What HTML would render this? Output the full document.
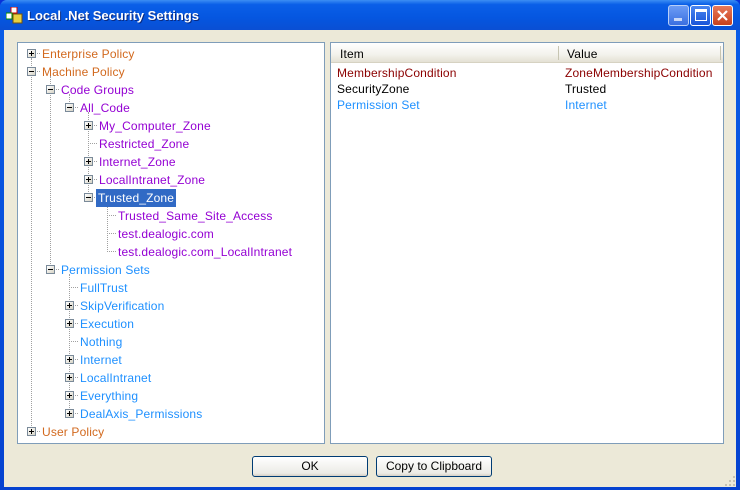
<!DOCTYPE html>
<html><head><meta charset="utf-8"><style>
*{margin:0;padding:0;box-sizing:border-box}
body{width:740px;height:490px;overflow:hidden;font-family:"Liberation Sans",sans-serif;font-size:12px;background:#0831d9}
.win{position:absolute;left:0;top:0;width:740px;height:490px;background:linear-gradient(#0a5ee8,#0542d0);border-radius:7px 7px 0 0}
.title{position:absolute;left:0;top:0;width:740px;height:30px;background:linear-gradient(#3c8ef3 0%,#0a5fe8 15%,#0556e0 60%,#0a4fd4 100%);border-radius:7px 7px 0 0}
.title span{position:absolute;left:27px;top:8px;color:#fff;font-weight:bold;font-size:13px;text-shadow:1px 1px #0a2a80}
.body{position:absolute;left:4px;top:30px;width:732px;height:457px;background:#ece9d8}
.panel{position:absolute;background:#fff;border:1px solid #7f9db9}
.t{position:absolute;white-space:nowrap;line-height:16px;letter-spacing:.15px}
.o{color:#d2691e}.p{color:#9400d3}.b{color:#1e90ff}.r{color:#8b0000}.k{color:#000}
.box{position:absolute;width:9px;height:9px;border:1px solid #7a8a99;background:linear-gradient(135deg,#fff,#d6d3c6);font-size:0}
.box::before{content:"";position:absolute;left:1px;top:3px;width:5px;height:1px;background:#000}
.box.pl::after{content:"";position:absolute;left:3px;top:1px;width:1px;height:5px;background:#000}
.vl{position:absolute;border-left:1px dotted #a0a0a0;width:0}
.hl{position:absolute;border-top:1px dotted #a0a0a0;height:0}
.btn{position:absolute;height:21px;border:1px solid #003c74;border-radius:3px;background:linear-gradient(#fff,#ecebe6 85%,#d6d0c5);text-align:center;line-height:19px;font-size:12px}
.wb{position:absolute;top:5px;width:21px;height:21px;border:1px solid #fff;border-radius:3px}
.g{position:absolute;width:2px;height:2px;background:#c5c2b2}
</style></head><body>
<div class="win">
<div class="title">
<svg style="position:absolute;left:6px;top:7px" width="18" height="17"><rect x="5" y="0" width="6" height="6" fill="#fff" stroke="#c00"/><rect x="0" y="6" width="6" height="6" fill="#fff" stroke="#080"/><rect x="7" y="7" width="9" height="9" fill="#e8d040" stroke="#705010"/></svg>
<span>Local .Net Security Settings</span>
<div class="wb" style="left:668px;background:linear-gradient(#6c9cf5,#3a6fe0);border-color:#b8cff8"><div style="position:absolute;left:5px;top:12px;width:8px;height:3px;background:#fff;opacity:.7"></div></div>
<div class="wb" style="left:690px;background:linear-gradient(#4a86f0,#1a55d8)"><div style="position:absolute;left:4px;top:3px;width:12px;height:12px;border:1px solid #fff;border-top-width:3px"></div></div>
<div class="wb" style="left:712px;background:linear-gradient(#e87a5a,#c8401c)"><svg width="19" height="19" style="position:absolute;left:0;top:0"><path d="M5 5L14 14M14 5L5 14" stroke="#fff" stroke-width="2.2"/></svg></div>
</div>
<div class="body"></div>
</div>

<div class="panel" style="left:17px;top:42px;width:308px;height:402px"></div>
<div class="panel" style="left:330px;top:42px;width:394px;height:402px"></div>
<div style="position:absolute;left:331px;top:43px;width:392px;height:20px;background:linear-gradient(#fff 0%,#f3f2ec 60%,#e4e1d4 100%);border-bottom:1px solid #d6d2c2"></div>
<div style="position:absolute;left:558px;top:46px;width:1px;height:14px;background:#c7c5b2"></div>
<div style="position:absolute;left:720px;top:46px;width:1px;height:14px;background:#c7c5b2"></div>
<div class="t k" style="left:340px;top:46px">Item</div>
<div class="t k" style="left:567px;top:46px">Value</div>
<div class="t r" style="left:337px;top:65px">MembershipCondition</div>
<div class="t r" style="left:565px;top:65px">ZoneMembershipCondition</div>
<div class="t k" style="left:337px;top:81px">SecurityZone</div>
<div class="t k" style="left:565px;top:81px">Trusted</div>
<div class="t b" style="left:337px;top:97px">Permission Set</div>
<div class="t b" style="left:565px;top:97px">Internet</div>

<div class="vl" style="left:31px;top:58px;height:374px"></div>
<div class="vl" style="left:50px;top:76px;height:194px"></div>
<div class="vl" style="left:69px;top:94px;height:14px"></div>
<div class="vl" style="left:88px;top:112px;height:86px"></div>
<div class="vl" style="left:107px;top:202px;height:50px"></div>
<div class="vl" style="left:69px;top:274px;height:140px"></div>

<div id="tree"></div>
<script>
var rows=[
[0,1,"Enterprise Policy","o"],[0,2,"Machine Policy","o"],[1,2,"Code Groups","p"],[2,2,"All_Code","p"],
[3,1,"My_Computer_Zone","p"],[3,0,"Restricted_Zone","p"],[3,1,"Internet_Zone","p"],[3,1,"LocalIntranet_Zone","p"],
[3,2,"Trusted_Zone","sel"],[4,0,"Trusted_Same_Site_Access","p"],[4,0,"test.dealogic.com","p"],[4,0,"test.dealogic.com_LocalIntranet","p"],
[1,2,"Permission Sets","b"],[2,0,"FullTrust","b"],[2,1,"SkipVerification","b"],[2,1,"Execution","b"],[2,0,"Nothing","b"],
[2,1,"Internet","b"],[2,1,"LocalIntranet","b"],[2,1,"Everything","b"],[2,1,"DealAxis_Permissions","b"],[0,1,"User Policy","o"]];
var h="";
rows.forEach(function(r,i){
 var L=r[0],c=53+18*i,bx=27+19*L,tx=42+19*L;
 h+='<div class="hl" style="left:'+(31+19*L)+'px;top:'+c+'px;width:'+(tx-31-19*L-2)+'px"></div>';
 if(r[1])h+='<div class="box'+(r[1]==1?' pl':'')+'" style="left:'+bx+'px;top:'+(c-4)+'px"></div>';
 if(r[3]=="sel")h+='<div class="t" style="left:'+(tx-3)+'px;top:'+(c-8)+'px;background:#316ac5;color:#fff;padding:1px 2px;line-height:16px">'+r[2]+'</div>';
 else h+='<div class="t '+r[3]+'" style="left:'+tx+'px;top:'+(c-7)+'px">'+r[2]+'</div>';
});
document.getElementById("tree").innerHTML=h;
</script>

<div class="btn" style="left:252px;top:456px;width:116px">OK</div>
<div class="btn" style="left:376px;top:456px;width:116px">Copy to Clipboard</div>
<div class="g" style="left:733px;top:476px"></div>
<div class="g" style="left:729px;top:480px"></div><div class="g" style="left:733px;top:480px"></div>
<div class="g" style="left:725px;top:484px"></div><div class="g" style="left:729px;top:484px"></div><div class="g" style="left:733px;top:484px"></div>
</body></html>
